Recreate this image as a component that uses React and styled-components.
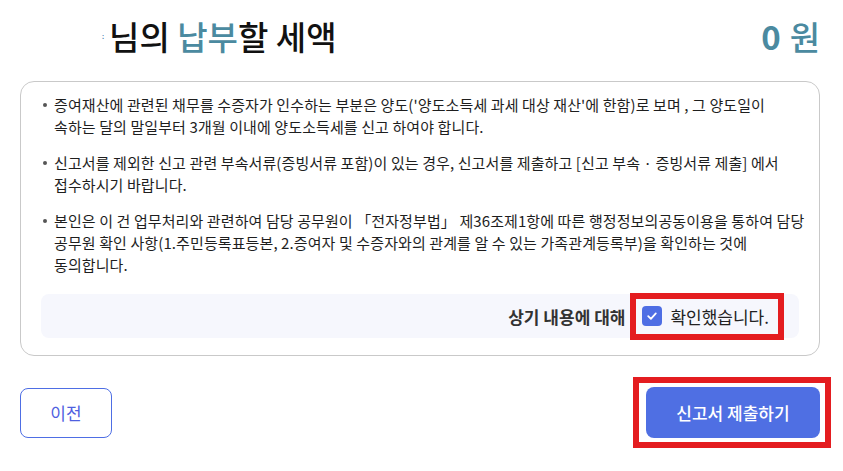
import React from "react";
import styled, { createGlobalStyle } from "styled-components";

const GlobalStyle = createGlobalStyle`
  body {
    margin: 0;
    background: #ffffff;
    font-family: "Noto Sans CJK KR", "Noto Sans", sans-serif;
    color: #222222;
  }
`;

const notices = [
  [
    "증여재산에 관련된 채무를 수증자가 인수하는 부분은 양도('양도소득세 과세 대상 재산'에 한함)로 보며 , 그 양도일이",
    "속하는 달의 말일부터 3개월 이내에 양도소득세를 신고 하여야 합니다.",
  ],
  [
    "신고서를 제외한 신고 관련 부속서류(증빙서류 포함)이 있는 경우, 신고서를 제출하고 [신고 부속 · 증빙서류 제출] 에서",
    "접수하시기 바랍니다.",
  ],
  [
    "본인은 이 건 업무처리와 관련하여 담당 공무원이 「전자정부법」 제36조제1항에 따른 행정정보의공동이용을 통하여 담당",
    "공무원 확인 사항(1.주민등록표등본, 2.증여자 및 수증자와의 관계를 알 수 있는 가족관계등록부)을 확인하는 것에",
    "동의합니다.",
  ],
];

const App = () => {
  return (
    <>
      <GlobalStyle />
      <Page>
        <Header>
          <Title>
            <NameStub>:</NameStub>
            님의 <Accent>납부</Accent>할 세액
          </Title>
          <Amount>
            <strong>0</strong>
            <span>원</span>
          </Amount>
        </Header>

        <Card>
          <NoticeList>
            {notices.map((lines, i) => (
              <NoticeItem key={i}>
                <span>
                  {lines.map((line, j) => (
                    <React.Fragment key={j}>
                      {j > 0 && <br />}
                      {line}
                    </React.Fragment>
                  ))}
                </span>
              </NoticeItem>
            ))}
          </NoticeList>

          <ConfirmBox>
            <ConfirmLead>상기 내용에 대해</ConfirmLead>
            <ConfirmLabel>
              <CheckBox>
                <svg width="12" height="12" viewBox="0 0 12 12">
                  <path
                    d="M2.2 6.2 L4.9 8.8 L9.8 3.4"
                    fill="none"
                    stroke="#ffffff"
                    strokeWidth="1.8"
                    strokeLinecap="round"
                    strokeLinejoin="round"
                  />
                </svg>
              </CheckBox>
              확인했습니다.
            </ConfirmLabel>
          </ConfirmBox>
        </Card>

        <Actions>
          <GhostButton>이전</GhostButton>
          <HighlightFrame>
            <PrimaryButton>신고서 제출하기</PrimaryButton>
          </HighlightFrame>
        </Actions>
      </Page>
    </>
  );
};

const Page = styled.div`
  width: 800px;
  margin-left: 20px;
  padding-bottom: 20px;
`;

const Header = styled.div`
  height: 72px;
  display: flex;
  align-items: center;
  justify-content: space-between;
`;

const Title = styled.h2`
  margin: 0;
  padding-left: 82px;
  font-size: 33px;
  font-weight: 500;
  color: #111111;
  display: flex;
  align-items: center;
  white-space: pre;
`;

const NameStub = styled.span`
  font-size: 7px;
  color: #4a7fb0;
  margin-right: 5px;
`;

const Accent = styled.span`
  color: #4b8aa0;
`;

const Amount = styled.div`
  display: flex;
  align-items: center;
  gap: 9px;
  font-size: 33px;
  color: #4b8aa0;

  strong {
    font-weight: 700;
  }
  span {
    font-weight: 500;
  }
`;

const Card = styled.div`
  margin-top: 9px;
  border: 1px solid #c9c9c9;
  border-radius: 14px;
  padding: 12px 20px 17px 20px;
`;

const NoticeList = styled.ul`
  margin: 0;
  padding: 0;
  list-style: none;
  display: flex;
  flex-direction: column;
  gap: 14px;
`;

const NoticeItem = styled.li`
  display: flex;
  align-items: flex-start;
  font-size: 15px;
  line-height: 22px;
  letter-spacing: 0.1px;
  color: #1e1e1e;
  white-space: nowrap;

  &::before {
    content: "";
    flex-shrink: 0;
    width: 4px;
    height: 4px;
    border-radius: 50%;
    background: #555555;
    margin: 9px 7px 0 2px;
  }
`;

const ConfirmBox = styled.div`
  margin-top: 18px;
  height: 44px;
  border-radius: 8px;
  background: #f6f7fd;
  display: flex;
  align-items: center;
  justify-content: flex-end;
  padding-right: 21px;
`;

const ConfirmLead = styled.span`
  font-size: 17px;
  font-weight: 700;
  color: #333333;
  margin-right: 11px;
`;

const ConfirmLabel = styled.label`
  height: 35px;
  display: flex;
  align-items: center;
  gap: 8px;
  padding: 0 9px 0 6px;
  font-size: 17px;
  color: #222222;
  outline: 6px solid #e41d20;
`;

const CheckBox = styled.span`
  width: 20px;
  height: 20px;
  border-radius: 4px;
  background: #4e6ee4;
  display: flex;
  align-items: center;
  justify-content: center;
`;

const Actions = styled.div`
  margin-top: 21px;
  display: flex;
  align-items: center;
  justify-content: space-between;
`;

const GhostButton = styled.button`
  width: 92px;
  height: 50px;
  border: 1px solid #4e6ee4;
  border-radius: 8px;
  background: #ffffff;
  color: #4f5fdf;
  font-family: inherit;
  font-size: 17px;
  font-weight: 400;
  cursor: pointer;
`;

const HighlightFrame = styled.div`
  display: flex;
  border: 6px solid #e41d20;
  padding: 4px 5px 4px 7px;
  margin-right: -11px;
`;

const PrimaryButton = styled.button`
  width: 174px;
  height: 51px;
  border: none;
  border-radius: 8px;
  background: #4f6fe3;
  color: #ffffff;
  font-family: inherit;
  font-size: 17px;
  font-weight: 500;
  cursor: pointer;
`;

export default App;
